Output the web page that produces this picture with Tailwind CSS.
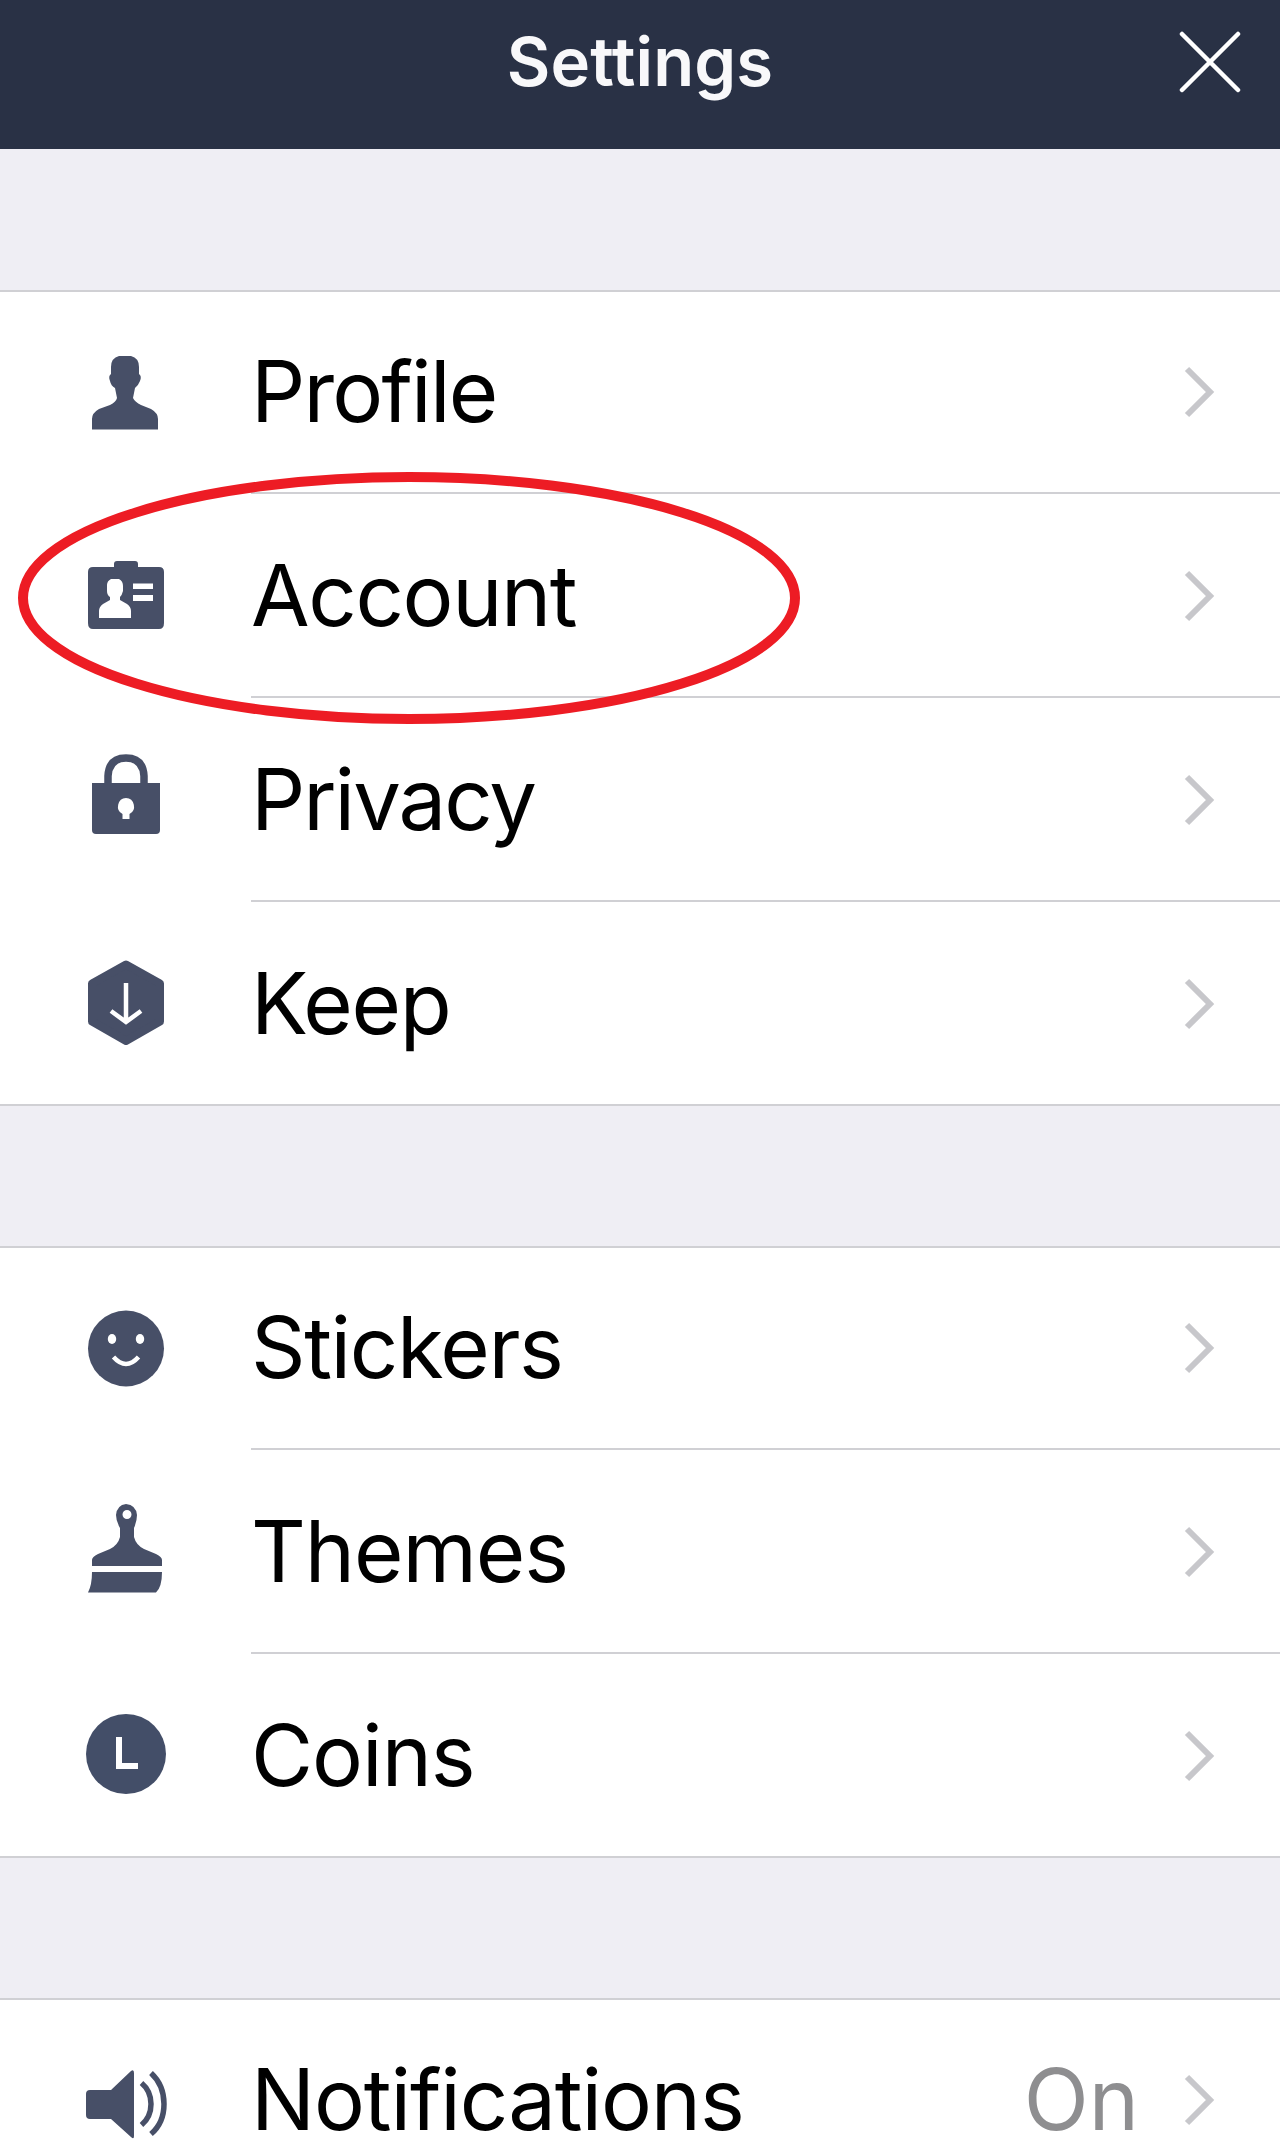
<!DOCTYPE html>
<html lang="en">
<head>
    <meta charset="UTF-8">
    <meta name="viewport" content="width=device-width, initial-scale=1.0">
    <title>Settings</title>
    <script src="https://cdn.jsdelivr.net/npm/@tailwindcss/browser@4"></script>
</head>
<body class="bg-[#efeef4] font-['Inter','Liberation_Sans',sans-serif] text-black h-[2152px] overflow-hidden relative">
    <svg class="hidden">
        <symbol id="chevron" viewBox="0 0 32 52"><path d="M3 3 L26 26 L3 49" fill="none" stroke="#c7c7cb" stroke-width="6"/></symbol>
    </svg>

    <!-- Header -->
    <header class="bg-[#293145] h-[149px] grid grid-cols-[1fr_auto_1fr] items-start">
        <h1 class="col-start-2 pt-[22px] text-[67px] leading-[80px] font-semibold tracking-[0.1px] text-[#f8f8fa]">Settings</h1>
        <svg class="justify-self-end mt-[30px] mr-[37px] w-[64px] h-[64px]" viewBox="0 0 64 64"><path d="M3 4 L59 60 M59 4 L3 60" stroke="#fff" stroke-width="4.5" stroke-linecap="round"/></svg>
    </header>

    <main class="text-[85px] leading-[100px]">
        <!-- Account group -->
        <ul class="mt-[141px] bg-white border-y-2 border-[#d0d0d4]">
            <li class="flex items-center h-[200px] pr-[64px]">
                <svg class="w-[120px] h-[120px] ml-[60px] mr-[71px] mb-1" viewBox="0 0 120 120"><path fill="#474f67" d="M59 26 H71 Q79 28 79 37 V44 Q82 46 80 51 Q78 56 75 58 L73 68 Q75 72 81 75 L91 79 Q98 83 98 89 V99.500 H32 V89 Q32 83 39 79 L50 75 Q56 72 57 68 L55 58 Q51 56 50 51 Q48 46 51 44 V37 Q51 28 59 26 Z"/></svg>
                <span class="flex-1 tracking-[-1.8px]">Profile</span>
                <svg class="w-8 h-[52px]"><use href="#chevron"/></svg>
            </li>
            <li class="flex items-center h-[204px]">
                <svg class="w-[120px] h-[120px] ml-[60px] mr-[71px] mb-1.5" viewBox="0 0 120 120">
                    <path fill="#474f67" d="M33 36 H54 V33 Q54 30 57 30 H75 Q78 30 78 33 V36 H99 Q104 36 104 41 V92 Q104 98 99 98 H33 Q28 98 28 92 V41 Q28 36 33 36 Z"/>
                    <path fill="#fff" d="M51 48 H59 Q63 50 63 55 V60 Q62 64 60 66 V69 L67 73 Q71 76 71 80 V87 H39 V80 Q39 76 43 73 L50 69 V66 Q47 64 47 60 V54 Q47 50 51 48 Z M73 52.500 H93 V58 H73 Z M73 64 H93 V70 H73 Z"/>
                </svg>
                <span class="flex-1 flex items-center h-full border-t-2 border-[#d0d0d4] pt-0.5 pr-[64px]">
                    <span class="flex-1 tracking-[-1.4px]">Account</span>
                    <svg class="w-8 h-[52px]"><use href="#chevron"/></svg>
                </span>
            </li>
            <li class="flex items-center h-[204px]">
                <svg class="w-[120px] h-[120px] ml-[60px] mr-[71px] mb-1" viewBox="0 0 120 120">
                    <path fill="none" stroke="#474f67" stroke-width="7.500" d="M48 48 V40 Q49 22 66 22 Q83 22 84 40 V48"/>
                    <path fill="#474f67" d="M32 47 H100 V94 Q100 98 96 98 H36 Q32 98 32 94 Z"/>
                    <path fill="#fff" d="M66 62 A8.500 8.500 0 0 1 69.500 78 V83 H62.500 V78 A8.500 8.500 0 0 1 66 62 Z"/>
                </svg>
                <span class="flex-1 flex items-center h-full border-t-2 border-[#d0d0d4] pt-0.5 pr-[64px]">
                    <span class="flex-1 tracking-[-2px]">Privacy</span>
                    <svg class="w-8 h-[52px]"><use href="#chevron"/></svg>
                </span>
            </li>
            <li class="flex items-center h-[204px]">
                <svg class="w-[120px] h-[120px] ml-[60px] mr-[71px] mb-0.5" viewBox="0 0 120 120">
                    <path fill="#474f67" stroke="#474f67" stroke-width="8" stroke-linejoin="round" d="M66 23.500 L100 42.500 V80.500 L66 100 L32 80.500 V42.500 Z"/>
                    <path fill="none" stroke="#fff" stroke-width="4.500" d="M66 42 V81 M51 70 L66 81 L81 70"/>
                </svg>
                <span class="flex-1 flex items-center h-full border-t-2 border-[#d0d0d4] pt-0.5 pr-[64px]">
                    <span class="flex-1 tracking-[-1.4px]">Keep</span>
                    <svg class="w-8 h-[52px]"><use href="#chevron"/></svg>
                </span>
            </li>
        </ul>

        <!-- Shop group -->
        <ul class="mt-[140px] bg-white border-y-2 border-[#d0d0d4]">
            <li class="flex items-center h-[200px] pr-[64px]">
                <svg class="w-[120px] h-[120px] ml-[60px] mr-[71px] mt-0.5" viewBox="0 0 120 120">
                    <circle cx="66" cy="59.500" r="38" fill="#474f67"/>
                    <ellipse cx="52" cy="50" rx="4.200" ry="5" fill="#fff"/>
                    <ellipse cx="80" cy="50" rx="4.200" ry="5" fill="#fff"/>
                    <path d="M53.500 68 Q66 82 78.500 68" fill="none" stroke="#fff" stroke-width="4.500"/>
                </svg>
                <span class="flex-1 tracking-[-1.4px]">Stickers</span>
                <svg class="w-8 h-[52px]"><use href="#chevron"/></svg>
            </li>
            <li class="flex items-center h-[204px]">
                <svg class="w-[120px] h-[120px] ml-[60px] mr-[71px] mt-0.5" viewBox="0 0 120 120">
                    <path fill="#474f67" fill-rule="evenodd" d="M66 13 Q76 14 77 24 Q77 30 74 37 V46 Q76 54 84 58 L96 63 Q102 66 102 69 V75 H32 V69 Q32 66 38 63 L50 58 Q58 54 60 46 V37 Q56 30 56 24 Q57 14 66 13 Z M67 19 A4.500 4.500 0 1 0 67 28 A4.500 4.500 0 1 0 67 19 Z M32 81 H102 Q102 96 96 101.500 H28 Q32 94 32 81 Z"/>
                </svg>
                <span class="flex-1 flex items-center h-full border-t-2 border-[#d0d0d4] pt-0.5 pr-[64px]">
                    <span class="flex-1 tracking-[-1.1px]">Themes</span>
                    <svg class="w-8 h-[52px]"><use href="#chevron"/></svg>
                </span>
            </li>
            <li class="flex items-center h-[204px]">
                <svg class="w-[120px] h-[120px] ml-[60px] mr-[71px]" viewBox="0 0 120 120">
                    <circle cx="66" cy="60" r="40" fill="#434e68"/>
                    <path d="M59 43 V72 H78" fill="none" stroke="#fff" stroke-width="6"/>
                </svg>
                <span class="flex-1 flex items-center h-full border-t-2 border-[#d0d0d4] pt-0.5 pr-[64px]">
                    <span class="flex-1 tracking-[-1px]">Coins</span>
                    <svg class="w-8 h-[52px]"><use href="#chevron"/></svg>
                </span>
            </li>
        </ul>

        <!-- Notifications group -->
        <ul class="mt-[140px] bg-white border-t-2 border-[#d0d0d4]">
            <li class="flex items-center h-[200px] pr-[64px]">
                <svg class="w-[120px] h-[120px] ml-[60px] mr-[71px]" viewBox="0 0 120 120">
                    <path fill="#474f67" d="M30 50 H51 L71 31 Q74 29 74 33 V96 Q74 100 71 97 L51 79 H30 Q26 79 26 75 V54 Q26 50 30 50 Z"/>
                    <path fill="none" stroke="#474f67" stroke-width="5.500" d="M81.500 43 Q91 51 91 64 Q91 77 81.500 85 M91 33 Q104 45 104 64 Q104 83 91 94"/>
                </svg>
                <span class="flex-1 tracking-[-1.1px]">Notifications</span>
                <span class="text-[#8e8e90] mr-[45px]">On</span>
                <svg class="w-8 h-[52px]"><use href="#chevron"/></svg>
            </li>
        </ul>
    </main>

    <!-- Ring around the Account row -->
    <svg class="absolute left-0 top-[460px] w-[820px] h-[280px]" viewBox="0 0 820 280"><ellipse cx="409" cy="138" rx="386" ry="121" fill="none" stroke="#ed1c24" stroke-width="10"/></svg>
</body>
</html>
